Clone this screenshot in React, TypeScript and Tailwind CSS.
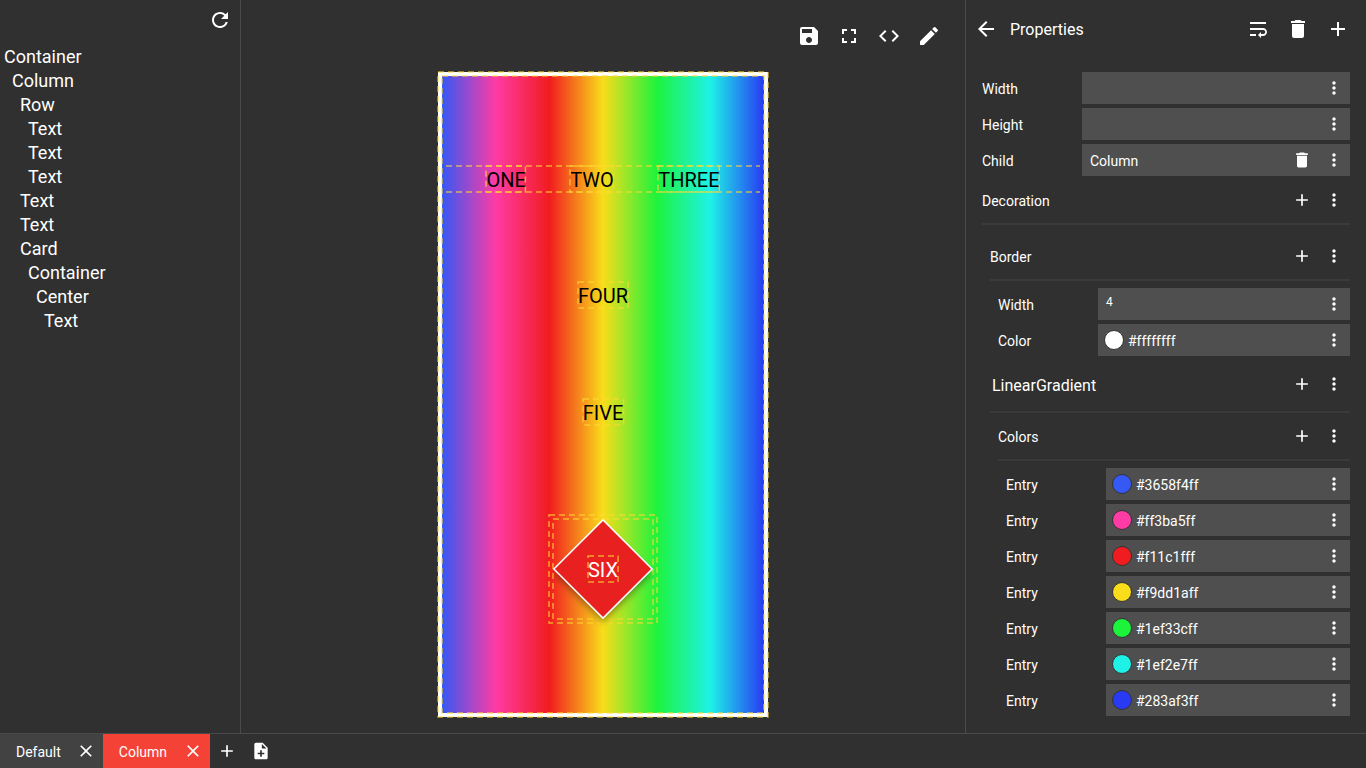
import type { ReactNode } from 'react'
import {
  MdAdd,
  MdArrowBack,
  MdClose,
  MdCode,
  MdDelete,
  MdEdit,
  MdFullscreen,
  MdMoreVert,
  MdNoteAdd,
  MdRefresh,
  MdSave,
  MdWrapText,
} from 'react-icons/md'

const tree: [string, number][] = [
  ['Container', 0],
  ['Column', 1],
  ['Row', 2],
  ['Text', 3],
  ['Text', 3],
  ['Text', 3],
  ['Text', 2],
  ['Text', 2],
  ['Card', 2],
  ['Container', 3],
  ['Center', 4],
  ['Text', 5],
]

const entries = [
  ['#3658f4ff', 'bg-[#3658f4]'],
  ['#ff3ba5ff', 'bg-[#ff3ba5]'],
  ['#f11c1fff', 'bg-[#f11c1f]'],
  ['#f9dd1aff', 'bg-[#f9dd1a]'],
  ['#1ef33cff', 'bg-[#1ef33c]'],
  ['#1ef2e7ff', 'bg-[#1ef2e7]'],
  ['#283af3ff', 'bg-[#283af3]'],
]

// selection outline drawn over the preview widgets
function Dash({ lines }: { lines?: boolean }) {
  return (
    <svg className="pointer-events-none absolute inset-0 h-full w-full overflow-visible">
      {lines ? (
        <>
          <line x1="0" x2="100%" y1="0" y2="0" stroke="#fdd835" strokeOpacity="0.7" strokeWidth="1.5" strokeDasharray="6 4" />
          <line x1="0" x2="100%" y1="100%" y2="100%" stroke="#fdd835" strokeOpacity="0.7" strokeWidth="1.5" strokeDasharray="6 4" />
        </>
      ) : (
        <rect
          x="0"
          y="0"
          width="100%"
          height="100%"
          fill="none"
          stroke="#fdd835"
          strokeOpacity="0.7"
          strokeWidth="1.5"
          strokeDasharray="6 4"
        />
      )}
    </svg>
  )
}

function PreviewText({ children, white }: { children: ReactNode; white?: boolean }) {
  return (
    <div className={`relative h-[26px] text-[20px] leading-[28px] ${white ? 'text-white' : 'text-black'}`}>
      {children}
      <Dash />
    </div>
  )
}

function Kebab() {
  return (
    <span className="flex w-5 shrink-0 justify-center">
      <MdMoreVert size={20} />
    </span>
  )
}

function Field({ label, children }: { label: string; children?: ReactNode }) {
  return (
    <div className="flex h-8 items-center">
      <span className="w-[100px] shrink-0 pt-0.5 text-sm">{label}</span>
      <div className="flex h-8 flex-1 items-center bg-[#4f4f4f] pr-[6px]">
        <div className="flex min-w-0 flex-1 items-center">{children}</div>
        <Kebab />
      </div>
    </div>
  )
}

function ColorValue({ value, swatch }: { value: string; swatch: string }) {
  return (
    <>
      <span className={`ml-[6px] size-5 rounded-full border border-[#333333] ${swatch}`} />
      <span className="ml-[4px] pt-0.5 text-sm">{value}</span>
    </>
  )
}

function Group({ label, rowClass, large }: { label: string; rowClass: string; large?: boolean }) {
  return (
    <div className="border-b-2 border-[#3a3a3a]">
      <div className={`flex items-center pr-[6px] ${rowClass}`}>
        <span className={large ? 'ml-[2px] pt-1 text-base' : 'pt-0.5 text-sm'}>{label}</span>
        <span className="ml-auto mr-3 flex w-5 justify-center">
          <MdAdd size={20} />
        </span>
        <Kebab />
      </div>
    </div>
  )
}

function Tab({ label, active }: { label: string; active?: boolean }) {
  return (
    <div className={`flex h-full items-center pl-4 pr-[7px] ${active ? 'bg-[#f44336]' : 'bg-[#424242]'}`}>
      <span className="pt-0.5 text-sm">{label}</span>
      <MdClose size={20} className={active ? 'ml-4' : 'ml-[15px]'} />
    </div>
  )
}

export default function App() {
  return (
    <div className="flex h-[768px] w-[1366px] flex-col overflow-hidden bg-[#303030] font-[Roboto,sans-serif] text-white">
      <div className="flex min-h-0 flex-1">
        {/* widget tree */}
        <aside className="w-[241px] shrink-0 border-r border-[#4a4a4a]">
          <div className="flex h-[45px] justify-end pr-2 pt-2">
            <MdRefresh size={24} />
          </div>
          <div className="pl-1 text-lg leading-6">
            {tree.map(([name, depth], i) => (
              <div key={i} style={{ paddingLeft: depth * 8 }}>
                {name}
              </div>
            ))}
          </div>
        </aside>

        {/* preview */}
        <main className="flex min-w-0 flex-1 flex-col items-center border-r border-[#4a4a4a]">
          <div className="flex h-[72px] w-full shrink-0 items-start justify-end gap-4 pr-6 pt-6">
            <MdSave size={24} />
            <MdFullscreen size={24} />
            <MdCode size={24} />
            <MdEdit size={24} />
          </div>
          <div className="relative h-[645px] w-[330px] shrink-0 border-4 border-white bg-[linear-gradient(90deg,#3658f4,#ff3ba5,#f11c1f,#f9dd1a,#1ef33c,#1ef2e7,#283af3)]">
            <div className="relative flex h-full flex-col items-center justify-evenly">
              <div className="relative flex w-full justify-evenly">
                <PreviewText>ONE</PreviewText>
                <PreviewText>TWO</PreviewText>
                <PreviewText>THREE</PreviewText>
                <div className="absolute inset-x-1 inset-y-0">
                  <Dash lines />
                </div>
              </div>
              <PreviewText>FOUR</PreviewText>
              <PreviewText>FIVE</PreviewText>
              <div className="relative flex size-[108px] items-center justify-center">
                <Dash />
                <div className="relative flex size-[100px] items-center justify-center">
                  <Dash />
                  <div className="absolute left-4 top-4 size-[68px] rotate-45 bg-[#e82020] shadow-[0_0_0_1.5px_#ffffff,4px_4px_6px_rgba(0,0,0,0.35)]" />
                  <PreviewText white>SIX</PreviewText>
                </div>
              </div>
            </div>
            <div className="absolute -inset-1">
              <Dash />
            </div>
            <div className="absolute inset-0">
              <Dash />
            </div>
          </div>
        </main>

        {/* properties */}
        <aside className="w-[400px] shrink-0">
          <div className="flex h-[58px] items-center pl-2 pr-4">
            <MdArrowBack size={24} />
            <span className="ml-3 pt-0.5 text-base">Properties</span>
            <div className="ml-auto flex gap-4">
              <MdWrapText size={24} />
              <MdDelete size={24} />
              <MdAdd size={24} />
            </div>
          </div>
          <div className="pl-4 pr-4 pt-[14px]">
            <div className="flex flex-col gap-1">
              <Field label="Width" />
              <Field label="Height" />
              <Field label="Child">
                <span className="ml-2 pt-0.5 text-sm">Column</span>
                <MdDelete size={20} className="ml-auto mr-3" />
              </Field>
            </div>
            <Group label="Decoration" rowClass="h-[47px]" />
            <div className="pl-2 pt-[7px]">
              <Group label="Border" rowClass="h-[47px]" />
              <div className="flex flex-col gap-1 pl-2 pt-[7px]">
                <Field label="Width">
                  <span className="mb-[4px] ml-2 text-xs">4</span>
                </Field>
                <Field label="Color">
                  <ColorValue value="#ffffffff" swatch="bg-white" />
                </Field>
              </div>
              <div className="pt-[4px]">
                <Group label="LinearGradient" rowClass="mb-[3px] h-12" large />
              </div>
              <div className="pl-2">
                <Group label="Colors" rowClass="h-[46px]" />
                <div className="flex flex-col gap-1 pl-2 pt-[7px]">
                  {entries.map(([value, swatch]) => (
                    <Field key={value} label="Entry">
                      <ColorValue value={value} swatch={swatch} />
                    </Field>
                  ))}
                </div>
              </div>
            </div>
          </div>
        </aside>
      </div>

      {/* file tabs */}
      <footer className="flex h-[35px] shrink-0 items-center border-t border-[#4a4a4a]">
        <Tab label="Default" />
        <Tab label="Column" active />
        <MdAdd size={20} className="ml-[7px]" />
        <MdNoteAdd size={20} className="ml-[14px]" />
      </footer>
    </div>
  )
}
